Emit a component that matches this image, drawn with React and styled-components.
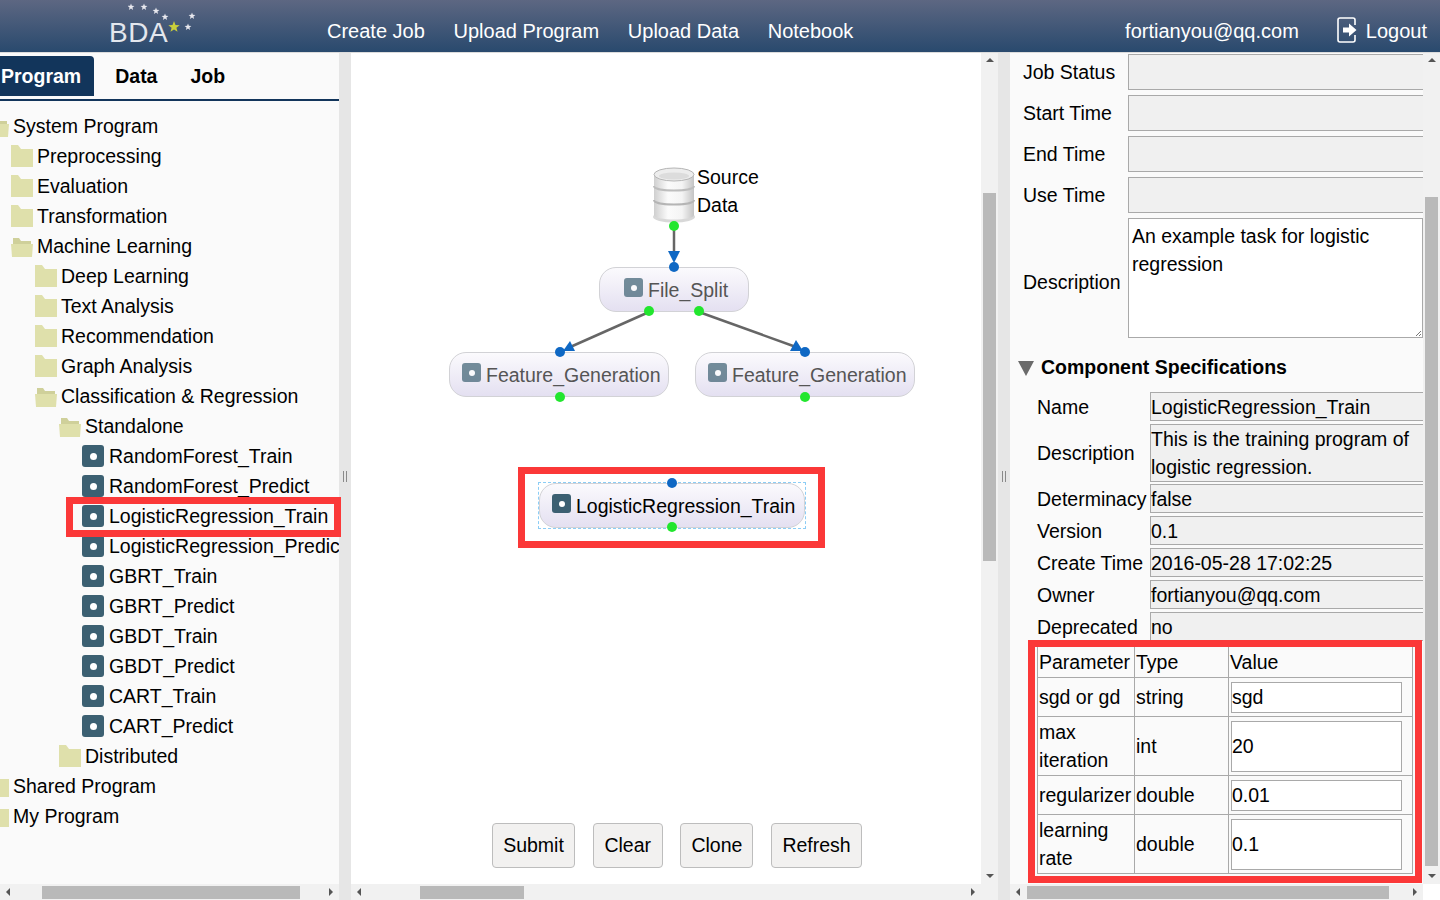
import React from 'react';
import styled, { createGlobalStyle } from 'styled-components';

const GlobalStyle = createGlobalStyle`
	html, body {
		margin: 0;
		padding: 0;
		overflow: hidden;
		background: #fff;
		color: #000;
		font-family: "Liberation Sans", Arial, sans-serif;
		font-size: 19.5px;
	}
	* {
		box-sizing: border-box;
	}
`

const Page = styled.div`
	display: flex;
	flex-direction: column;
	width: 1440px;
	height: 900px;
	overflow: hidden;
`

const Header = styled.header`
	position: relative;
	z-index: 1;
	display: flex;
	align-items: center;
	flex: 0 0 52px;
	padding: 10px 13px 0 109px;
	background: linear-gradient(#5d6782, #2a4a6e 98%);
	box-shadow: 0 1px 0 #dcdcdc;
	color: #fff;
	font-size: 20px;
`

const Logo = styled.div`
	position: relative;
	width: 218px;
	padding-top: 4px;
	font-size: 28px;
	letter-spacing: 0.6px;
	line-height: 32px;
	color: #e3e7ee;
`

const LogoStars = styled.svg`
	position: absolute;
	left: 19px;
	top: -13px;
`

const Nav = styled.nav`
	display: flex;
	gap: 28.7px;
`

const UserArea = styled.div`
	display: flex;
	align-items: center;
	margin-left: auto;
`

const Email = styled.span`
	margin-right: 38px;
`

const LogoutIcon = styled.svg`
	margin: -2px 9px 0 0;
`

const Main = styled.div`
	position: relative;
	display: grid;
	grid-template-columns: 339px 12px 647px 12px 430px;
	flex: 1;
	min-height: 0;
`

const ScrollPanel = styled.section`
	display: grid;
	grid-template-columns: ${props => props.$vbar ? '1fr 17px' : '1fr'};
	grid-template-rows: 832px 16px;
	min-width: 0;
	background: ${props => props.$bg};
`

const Splitter = styled.div`
	display: flex;
	align-items: center;
	justify-content: center;
	background: #e6e6e6;
`

const Grip = styled.div`
	width: 4px;
	height: 11px;
	border-left: 1px solid #8a8a8a;
	border-right: 1px solid #8a8a8a;
`

const VBar = styled.div`
	display: flex;
	flex-direction: column;
	background: #f1f1f1;
	overflow: hidden;
`

const VTrack = styled.div`
	flex: 1;
	padding: ${props => props.$start}px 0 0 2px;
`

const VThumb = styled.div`
	width: 13px;
	height: ${props => props.$size}px;
	background: #b9b9b9;
`

const HBar = styled.div`
	display: flex;
	background: #f1f1f1;
	overflow: hidden;
`

const HTrack = styled.div`
	flex: 1;
	padding: 2px 0 0 ${props => props.$start}px;
`

const HThumb = styled.div`
	height: 13px;
	width: ${props => props.$size}px;
	background: #b9b9b9;
`

const Arrow = styled.div`
	display: flex;
	align-items: center;
	justify-content: center;
	flex: 0 0 16px;
	height: 16px;

	&::before {
		content: '';
		border: 4px solid transparent;
		${props => props.$dir === 'up' && 'border-bottom-color: #555; margin-top: -4px;'}
		${props => props.$dir === 'down' && 'border-top-color: #555; margin-top: 4px;'}
		${props => props.$dir === 'left' && 'border-right-color: #555; margin-left: -4px;'}
		${props => props.$dir === 'right' && 'border-left-color: #555; margin-left: 4px;'}
	}
`

const Corner = styled.div`
	background: ${props => props.$bg || '#fff'};
`

const ScrollContent = styled.div`
	min-width: 0;
	overflow: hidden;
`

const Tabs = styled.div`
	display: flex;
	align-items: center;
	height: 49px;
	padding-top: 5px;
	border-bottom: 2px solid #12355b;
	margin-bottom: 10px;
	font-weight: 700;
`

const Tab = styled.div`
	display: flex;
	align-items: center;
	height: 40px;
	margin-bottom: 4px;
	padding: ${props => props.$active ? '0 13px 0 1px' : '0'};
	margin-right: ${props => props.$active ? '21px' : '33px'};
	border-radius: 0 4px 0 0;
	background: ${props => props.$active ? '#12355b' : 'transparent'};
	color: ${props => props.$active ? '#fff' : '#000'};
`

const TreeRow = styled.div`
	display: flex;
	align-items: center;
	height: 30px;
	margin-left: ${props => props.$offset}px;
	white-space: nowrap;
`

const FolderIcon = styled.svg`
	flex: none;
	margin-right: 4px;
`

const ProgramIcon = styled.span`
	display: flex;
	align-items: center;
	justify-content: center;
	flex: none;
	width: ${props => props.$size}px;
	height: ${props => props.$size}px;
	border-radius: 3px;
	background: #3c6072;

	&::after {
		content: '';
		width: ${props => Math.round(props.$size / 3)}px;
		height: ${props => Math.round(props.$size / 3)}px;
		border-radius: 50%;
		background: #fff;
	}
`

const TreeProgramIcon = styled(ProgramIcon)`
	margin-right: 5px;
`

const Highlight = styled.div`
	position: absolute;
	left: ${props => props.$left}px;
	top: ${props => props.$top}px;
	width: ${props => props.$width}px;
	height: ${props => props.$height}px;
	border: 7px solid #fb3838;
	pointer-events: none;
`

const CenterContent = styled(ScrollContent)`
	display: flex;
	flex-direction: column;
	background: #fff;
`

const Canvas = styled.div`
	position: relative;
	flex: 0 0 771px;
`

const Wires = styled.svg`
	position: absolute;
	left: 0;
	top: 0;
`

const Node = styled.div`
	position: absolute;
	left: ${props => props.$x}px;
	top: ${props => props.$y}px;
	width: ${props => props.$w}px;
	height: 45px;
	display: flex;
	align-items: center;
	gap: 5px;
	padding: 1px 0 0 ${props => props.$pad}px;
	border: 1px solid #d2d2d6;
	border-radius: 17px;
	background: linear-gradient(#fbfafd, #e4e0f1);
	color: ${props => props.$selected ? '#000' : '#555'};
	white-space: nowrap;

	${props => props.$selected && `
		&::after {
			content: '';
			position: absolute;
			inset: -2px;
			border: 1px dashed #8ccdf5;
		}
	`}
`

const NodeIcon = styled(ProgramIcon)`
	opacity: ${props => props.$dim ? 0.7 : 1};
	margin-top: -5px;
`

const Dot = styled.span`
	position: absolute;
	left: ${props => props.$x - 5}px;
	top: ${props => props.$y - 5}px;
	width: 10px;
	height: 10px;
	border-radius: 50%;
	background: ${props => props.$out ? '#22e62e' : '#0f68c4'};
`

const DbIcon = styled.svg`
	position: absolute;
	left: 302px;
	top: 115px;
`

const DbLabel = styled.div`
	position: absolute;
	left: 346px;
	top: 111px;
	line-height: 28px;
`

const Toolbar = styled.div`
	display: flex;
	gap: 17.7px;
	padding-left: 141px;
`

const Button = styled.button`
	width: ${props => props.$w}px;
	height: 45px;
	padding: 0;
	border: 1px solid #bdbdbd;
	border-radius: 4px;
	background: #f2f1f0;
	color: #000;
	font: inherit;
`

const RightContent = styled(ScrollContent)`
	padding: 2px 0 0 13px;
	background: #fafafa;
`

const FormRow = styled.div`
	display: grid;
	grid-template-columns: 105px 1fr;
	align-items: center;
	margin-bottom: 5px;
`

const EmptyField = styled.div`
	height: 36px;
	margin-right: -10px;
	border: 1px solid #a9a9a9;
	background: #f0f0f0;
`

const DescriptionLabel = styled.span`
	margin-top: 8px;
`

const TextArea = styled.div`
	position: relative;
	height: 120px;
	padding: 3px;
	border: 1px solid #a9a9a9;
	background: #fff;
	line-height: 28px;
`

const ResizeGrip = styled.svg`
	position: absolute;
	right: 0;
	bottom: 0;
`

const SpecHeading = styled.div`
	display: flex;
	align-items: center;
	margin: 15px 0 11px -5px;
	line-height: 28px;
	font-weight: 700;
`

const SpecToggle = styled.span`
	width: 0;
	height: 0;
	margin: 3px 7px 0 0;
	border-left: 8px solid transparent;
	border-right: 8px solid transparent;
	border-top: 15px solid #6b6b6b;
`

const SpecRow = styled.div`
	display: grid;
	grid-template-columns: 113px 1fr;
	align-items: center;
	margin: 0 0 ${props => props.$tall ? 2 : 3}px 14px;
	line-height: 28px;
	white-space: nowrap;
`

const SpecValue = styled.div`
	height: ${props => props.$tall ? 58 : 29}px;
	margin-right: -10px;
	padding-top: ${props => props.$tall ? 0 : 1}px;
	border: 1px solid #a9a9a9;
	border-right: 0;
	background: #f0f0f0;
	line-height: ${props => props.$tall ? 28 : 27}px;
`

const ParamWrap = styled.div`
	position: relative;
	width: 375px;
	margin: 5px 0 0 14px;
`

const ParamTable = styled.table`
	width: 375px;
	table-layout: fixed;
	border-collapse: collapse;
	line-height: 28px;
`

const ParamCell = styled.td`
	padding: 0 0 0 1px;
	border: 1px solid #a9a9a9;
	height: ${props => props.$h}px;
`

const ParamInput = styled.input`
	display: block;
	width: 171px;
	height: ${props => props.$h}px;
	margin-left: 1px;
	padding: 0;
	border: 1px solid #a9a9a9;
	background: #fff;
	color: #000;
	font: inherit;
`

const treeItems = [
	{ label: 'System Program', level: 0, kind: 'open' },
	{ label: 'Preprocessing', level: 1, kind: 'closed' },
	{ label: 'Evaluation', level: 1, kind: 'closed' },
	{ label: 'Transformation', level: 1, kind: 'closed' },
	{ label: 'Machine Learning', level: 1, kind: 'open' },
	{ label: 'Deep Learning', level: 2, kind: 'closed' },
	{ label: 'Text Analysis', level: 2, kind: 'closed' },
	{ label: 'Recommendation', level: 2, kind: 'closed' },
	{ label: 'Graph Analysis', level: 2, kind: 'closed' },
	{ label: 'Classification & Regression', level: 2, kind: 'open' },
	{ label: 'Standalone', level: 3, kind: 'open' },
	{ label: 'RandomForest_Train', level: 4 },
	{ label: 'RandomForest_Predict', level: 4 },
	{ label: 'LogisticRegression_Train', level: 4 },
	{ label: 'LogisticRegression_Predict', level: 4 },
	{ label: 'GBRT_Train', level: 4 },
	{ label: 'GBRT_Predict', level: 4 },
	{ label: 'GBDT_Train', level: 4 },
	{ label: 'GBDT_Predict', level: 4 },
	{ label: 'CART_Train', level: 4 },
	{ label: 'CART_Predict', level: 4 },
	{ label: 'Distributed', level: 3, kind: 'closed' },
	{ label: 'Shared Program', level: 0, kind: 'closed' },
	{ label: 'My Program', level: 0, kind: 'closed' },
]

const statusFields = ['Job Status', 'Start Time', 'End Time', 'Use Time']

const specs = [
	{ label: 'Name', value: 'LogisticRegression_Train' },
	{ label: 'Description', value: <>This is the training program of<br />logistic regression.</>, tall: true },
	{ label: 'Determinacy', value: 'false' },
	{ label: 'Version', value: '0.1' },
	{ label: 'Create Time', value: '2016-05-28 17:02:25' },
	{ label: 'Owner', value: 'fortianyou@qq.com' },
	{ label: 'Deprecated', value: 'no' },
]

const params = [
	{ name: 'sgd or gd', type: 'string', value: 'sgd', row: 39, input: 31 },
	{ name: 'max iteration', type: 'int', value: '20', row: 59, input: 51 },
	{ name: 'regularizer', type: 'double', value: '0.01', row: 39, input: 31 },
	{ name: 'learning rate', type: 'double', value: '0.1', row: 59, input: 51 },
]

const buttons = [
	{ label: 'Submit', width: 83 },
	{ label: 'Clear', width: 70 },
	{ label: 'Clone', width: 73 },
	{ label: 'Refresh', width: 91 },
]

const star = (cx, cy, r) => {
	const points = [];
	for (let i = 0; i < 10; i++) {
		const radius = i % 2 === 0 ? r : r * 0.42;
		const angle = -Math.PI / 2 + i * Math.PI / 5;
		points.push(`${(cx + radius * Math.cos(angle)).toFixed(2)},${(cy + radius * Math.sin(angle)).toFixed(2)}`);
	}
	return points.join(' ');
}

const Folder = ({ open }) => (
	<FolderIcon width='22' height='22' viewBox='0 0 22 22'>
		{open ? (
			<>
				<path d='M2 3 L8 3 L10 6 L20 6 L20 9 L2 9 Z' fill='#cfd09a' />
				<path d='M0 9 L22 9 L21 22 L1 22 Z' fill='#dfe0ab' />
			</>
		) : (
			<path d='M0 0 L7 0 L10 4 L22 4 L22 22 L0 22 Z' fill='#dfe0ab' />
		)}
	</FolderIcon>
)

const HScroll = ({ start, size }) => (
	<HBar>
		<Arrow $dir='left' />
		<HTrack $start={start}><HThumb $size={size} /></HTrack>
		<Arrow $dir='right' />
	</HBar>
)

const VScroll = ({ start, size }) => (
	<VBar>
		<Arrow $dir='up' />
		<VTrack $start={start}><VThumb $size={size} /></VTrack>
		<Arrow $dir='down' />
	</VBar>
)

const App = () => {
	return (
		<Page>
			<GlobalStyle />
			<Header>
				<Logo>
					BDA
					<LogoStars width='100' height='40' viewBox='0 0 100 40'>
						{[[3, 7], [16, 7], [28, 11], [37, 17], [64, 16], [60, 27]].map(([x, y]) => (
							<polygon key={x} points={star(x, y, 3.6)} fill='#e8e8ee' />
						))}
						<polygon points={star(46, 27, 6)} fill='#c9cf3a' />
					</LogoStars>
				</Logo>
				<Nav>
					<span>Create Job</span>
					<span>Upload Program</span>
					<span>Upload Data</span>
					<span>Notebook</span>
				</Nav>
				<UserArea>
					<Email>fortianyou@qq.com</Email>
					<LogoutIcon width='20' height='26' viewBox='0 0 20 26'>
						<path d='M18 8 V3 Q18 1 16 1 H3 Q1 1 1 3 V23 Q1 25 3 25 H16 Q18 25 18 23 V18' fill='none' stroke='#fff' strokeWidth='1.6' />
						<path d='M6 10.5 H12 V6.5 L19.5 13 L12 19.5 V15.5 H6 Z' fill='#fff' />
					</LogoutIcon>
					<span>Logout</span>
				</UserArea>
			</Header>
			<Main>
				<ScrollPanel $bg='#fafafa'>
					<ScrollContent>
						<Tabs>
							<Tab $active>Program</Tab>
							<Tab>Data</Tab>
							<Tab>Job</Tab>
						</Tabs>
						{treeItems.map(item => (
							<TreeRow key={item.label} $offset={item.level === 4 ? 82 : item.level * 24 - 13}>
								{item.kind
									? <Folder open={item.kind === 'open'} />
									: <TreeProgramIcon $size={22} />}
								{item.label}
							</TreeRow>
						))}
					</ScrollContent>
					<HScroll start={26} size={258} />
				</ScrollPanel>
				<Splitter><Grip /></Splitter>
				<ScrollPanel $vbar $bg='#fff'>
					<CenterContent>
						<Canvas>
							{/* viewBox uses page coordinates, canvas starts at 351,52 */}
							<Wires width='631' height='771' viewBox='351 52 631 771'>
								<g stroke='#666' strokeWidth='2.5' fill='none'>
									<line x1='674' y1='230' x2='674' y2='253' />
									<line x1='649' y1='312' x2='568' y2='348' />
									<line x1='699' y1='312' x2='796' y2='347' />
								</g>
								<g fill='#0f68c4'>
									<polygon points='668,251 680,251 674,263' />
									<polygon points='563,351 570,341 575,351' />
									<polygon points='790,351 796,340 803,351' />
								</g>
							</Wires>
							<DbIcon width='43' height='56' viewBox='0 0 43 56'>
								<defs>
									<linearGradient id='dbBody' x1='0' x2='1' y1='0' y2='0'>
										<stop offset='0' stopColor='#cfcfcf' />
										<stop offset='0.35' stopColor='#fbfbfb' />
										<stop offset='0.7' stopColor='#f4f4f4' />
										<stop offset='1' stopColor='#c4c4c4' />
									</linearGradient>
								</defs>
								<ellipse cx='21' cy='50' rx='21' ry='5.5' fill='#d8d8d8' />
								<path d='M1 8 V48 C1 54 41 54 41 48 V8 Z' fill='url(#dbBody)' />
								<ellipse cx='21' cy='7.5' rx='20' ry='6.5' fill='#ededed' stroke='#b5b5b5' />
								<ellipse cx='21' cy='9' rx='15' ry='3.5' fill='#dcdcdc' />
								<path d='M1 19 C1 25 41 25 41 19' fill='none' stroke='#bdbdbd' strokeWidth='2' />
								<path d='M1 33 C1 39 41 39 41 33' fill='none' stroke='#b5b5b5' strokeWidth='2' />
							</DbIcon>
							<DbLabel>Source<br />Data</DbLabel>

							<Node $x={248} $y={215} $w={150} $pad={24}>
								<NodeIcon $size={19} $dim />File_Split
							</Node>
							<Node $x={98} $y={300} $w={220} $pad={12}>
								<NodeIcon $size={19} $dim />Feature_Generation
							</Node>
							<Node $x={344} $y={300} $w={220} $pad={12}>
								<NodeIcon $size={19} $dim />Feature_Generation
							</Node>
							<Node $x={188} $y={431} $w={266} $pad={12} $selected>
								<NodeIcon $size={19} />LogisticRegression_Train
							</Node>
							<Highlight $left={167} $top={415} $width={307} $height={81} />

							<Dot $out $x={323} $y={174} />
							<Dot $x={323} $y={215} />
							<Dot $out $x={298} $y={259} />
							<Dot $out $x={348} $y={259} />
							<Dot $x={209} $y={300} />
							<Dot $out $x={209} $y={345} />
							<Dot $x={454} $y={300} />
							<Dot $out $x={454} $y={345} />
							<Dot $x={321} $y={431} />
							<Dot $out $x={321} $y={475} />
						</Canvas>
						<Toolbar>
							{buttons.map(button => (
								<Button key={button.label} $w={button.width}>{button.label}</Button>
							))}
						</Toolbar>
					</CenterContent>
					<VScroll start={125} size={368} />
					<HScroll start={53} size={104} />
					<Corner $bg='#f1f1f1' />
				</ScrollPanel>
				<Splitter><Grip /></Splitter>
				<ScrollPanel $vbar $bg='#fafafa'>
					<RightContent>
						{statusFields.map(label => (
							<FormRow key={label}>
								<span>{label}</span>
								<EmptyField />
							</FormRow>
						))}
						<FormRow>
							<DescriptionLabel>Description</DescriptionLabel>
							<TextArea>
								An example task for logistic regression
								<ResizeGrip width='8' height='8' viewBox='0 0 8 8'>
									<path d='M7 2 L2 7 M7 5 L5 7' stroke='#777' strokeWidth='1' />
								</ResizeGrip>
							</TextArea>
						</FormRow>
						<SpecHeading>
							<SpecToggle />
							Component Specifications
						</SpecHeading>
						{specs.map(spec => (
							<SpecRow key={spec.label} $tall={spec.tall}>
								<span>{spec.label}</span>
								<SpecValue $tall={spec.tall}>{spec.value}</SpecValue>
							</SpecRow>
						))}
						<ParamWrap>
							<ParamTable>
								<colgroup>
									<col width='97' />
									<col width='94' />
									<col width='184' />
								</colgroup>
								<tbody>
									<tr>
										<ParamCell $h={31}>Parameter</ParamCell>
										<ParamCell $h={31}>Type</ParamCell>
										<ParamCell $h={31}>Value</ParamCell>
									</tr>
									{params.map(param => (
										<tr key={param.name}>
											<ParamCell $h={param.row}>{param.name}</ParamCell>
											<ParamCell $h={param.row}>{param.type}</ParamCell>
											<ParamCell $h={param.row}>
												<ParamInput $h={param.input} defaultValue={param.value} />
											</ParamCell>
										</tr>
									))}
								</tbody>
							</ParamTable>
							<Highlight $left={-9} $top={-6} $width={394} $height={243} />
						</ParamWrap>
					</RightContent>
					<VScroll start={129} size={669} />
					<HScroll start={1} size={362} />
					<Corner />
				</ScrollPanel>
				<Highlight $left={66} $top={445} $width={275} $height={40} />
			</Main>
		</Page>
	);
}

export default App;
